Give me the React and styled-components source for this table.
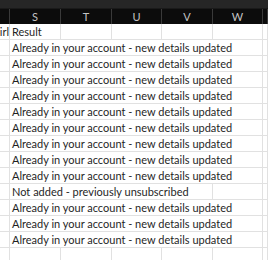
import React from "react";
import styled, { createGlobalStyle } from "styled-components";

const GlobalStyle = createGlobalStyle`
  html, body {
    margin: 0;
    padding: 0;
    background: #ffffff;
  }
  body {
    width: 268px;
    height: 260px;
    overflow: hidden;
  }
`;

const COLS = "10px 51px 51px 50px 51px 50px 1fr";

const Sheet = styled.div`
  width: 268px;
  height: 260px;
  overflow: hidden;
  font-family: "Lato", "Liberation Sans", sans-serif;
`;

const TopBand = styled.div`
  height: 9px;
  background: #262626;
  border-bottom: 1px solid #1a1a1a;
  box-sizing: border-box;
`;

const HeaderRow = styled.div`
  display: grid;
  grid-template-columns: ${COLS};
  height: 15px;
  background: #0c0c0c;
`;

const HeaderCell = styled.div`
  display: flex;
  align-items: center;
  justify-content: center;
  border-right: 1px solid #3a3a3a;
  color: #c4c4c4;
  font-size: 11px;
  line-height: 1;
`;

const Row = styled.div`
  display: grid;
  grid-template-columns: ${COLS};
  height: 16px;
  box-sizing: border-box;
  border-bottom: 1px solid #e1e1e1;
`;

const Cell = styled.div`
  grid-column: span ${(p) => p.$span || 1};
  display: flex;
  align-items: center;
  justify-content: ${(p) => (p.$right ? "flex-end" : "flex-start")};
  padding-left: ${(p) => (p.$right ? "0" : "2px")};
  border-right: 1px solid #e1e1e1;
  overflow: hidden;
  white-space: nowrap;
  color: #1f1f1f;
  font-size: 11px;
  min-width: 0;
`;

const letters = ["", "S", "T", "U", "V", "W", ""];

const ALREADY = "Already in your account - new details updated";
const NOT_ADDED = "Not added - previously unsubscribed";

const results = [
  ALREADY, ALREADY, ALREADY, ALREADY, ALREADY, ALREADY, ALREADY, ALREADY, ALREADY,
  NOT_ADDED,
  ALREADY, ALREADY, ALREADY,
];

function DataRow({ text }) {
  const span = text === NOT_ADDED ? 4 : 5;
  const rest = 6 - span;
  return (
    <Row>
      <Cell $right />
      <Cell $span={span}>{text}</Cell>
      {Array.from({ length: rest }).map((_, i) => (
        <Cell key={i} />
      ))}
    </Row>
  );
}

export default function App() {
  return (
    <>
      <GlobalStyle />
      <Sheet>
        <TopBand />
        <HeaderRow>
          {letters.map((l, i) => (
            <HeaderCell key={i}>{l}</HeaderCell>
          ))}
        </HeaderRow>
        <Row>
          <Cell $right>Girl</Cell>
          <Cell>Result</Cell>
          <Cell />
          <Cell />
          <Cell />
          <Cell />
          <Cell />
        </Row>
        {results.map((t, i) => (
          <DataRow key={i} text={t} />
        ))}
        <Row>
          <Cell />
          <Cell />
          <Cell />
          <Cell />
          <Cell />
          <Cell />
          <Cell />
        </Row>
      </Sheet>
    </>
  );
}
